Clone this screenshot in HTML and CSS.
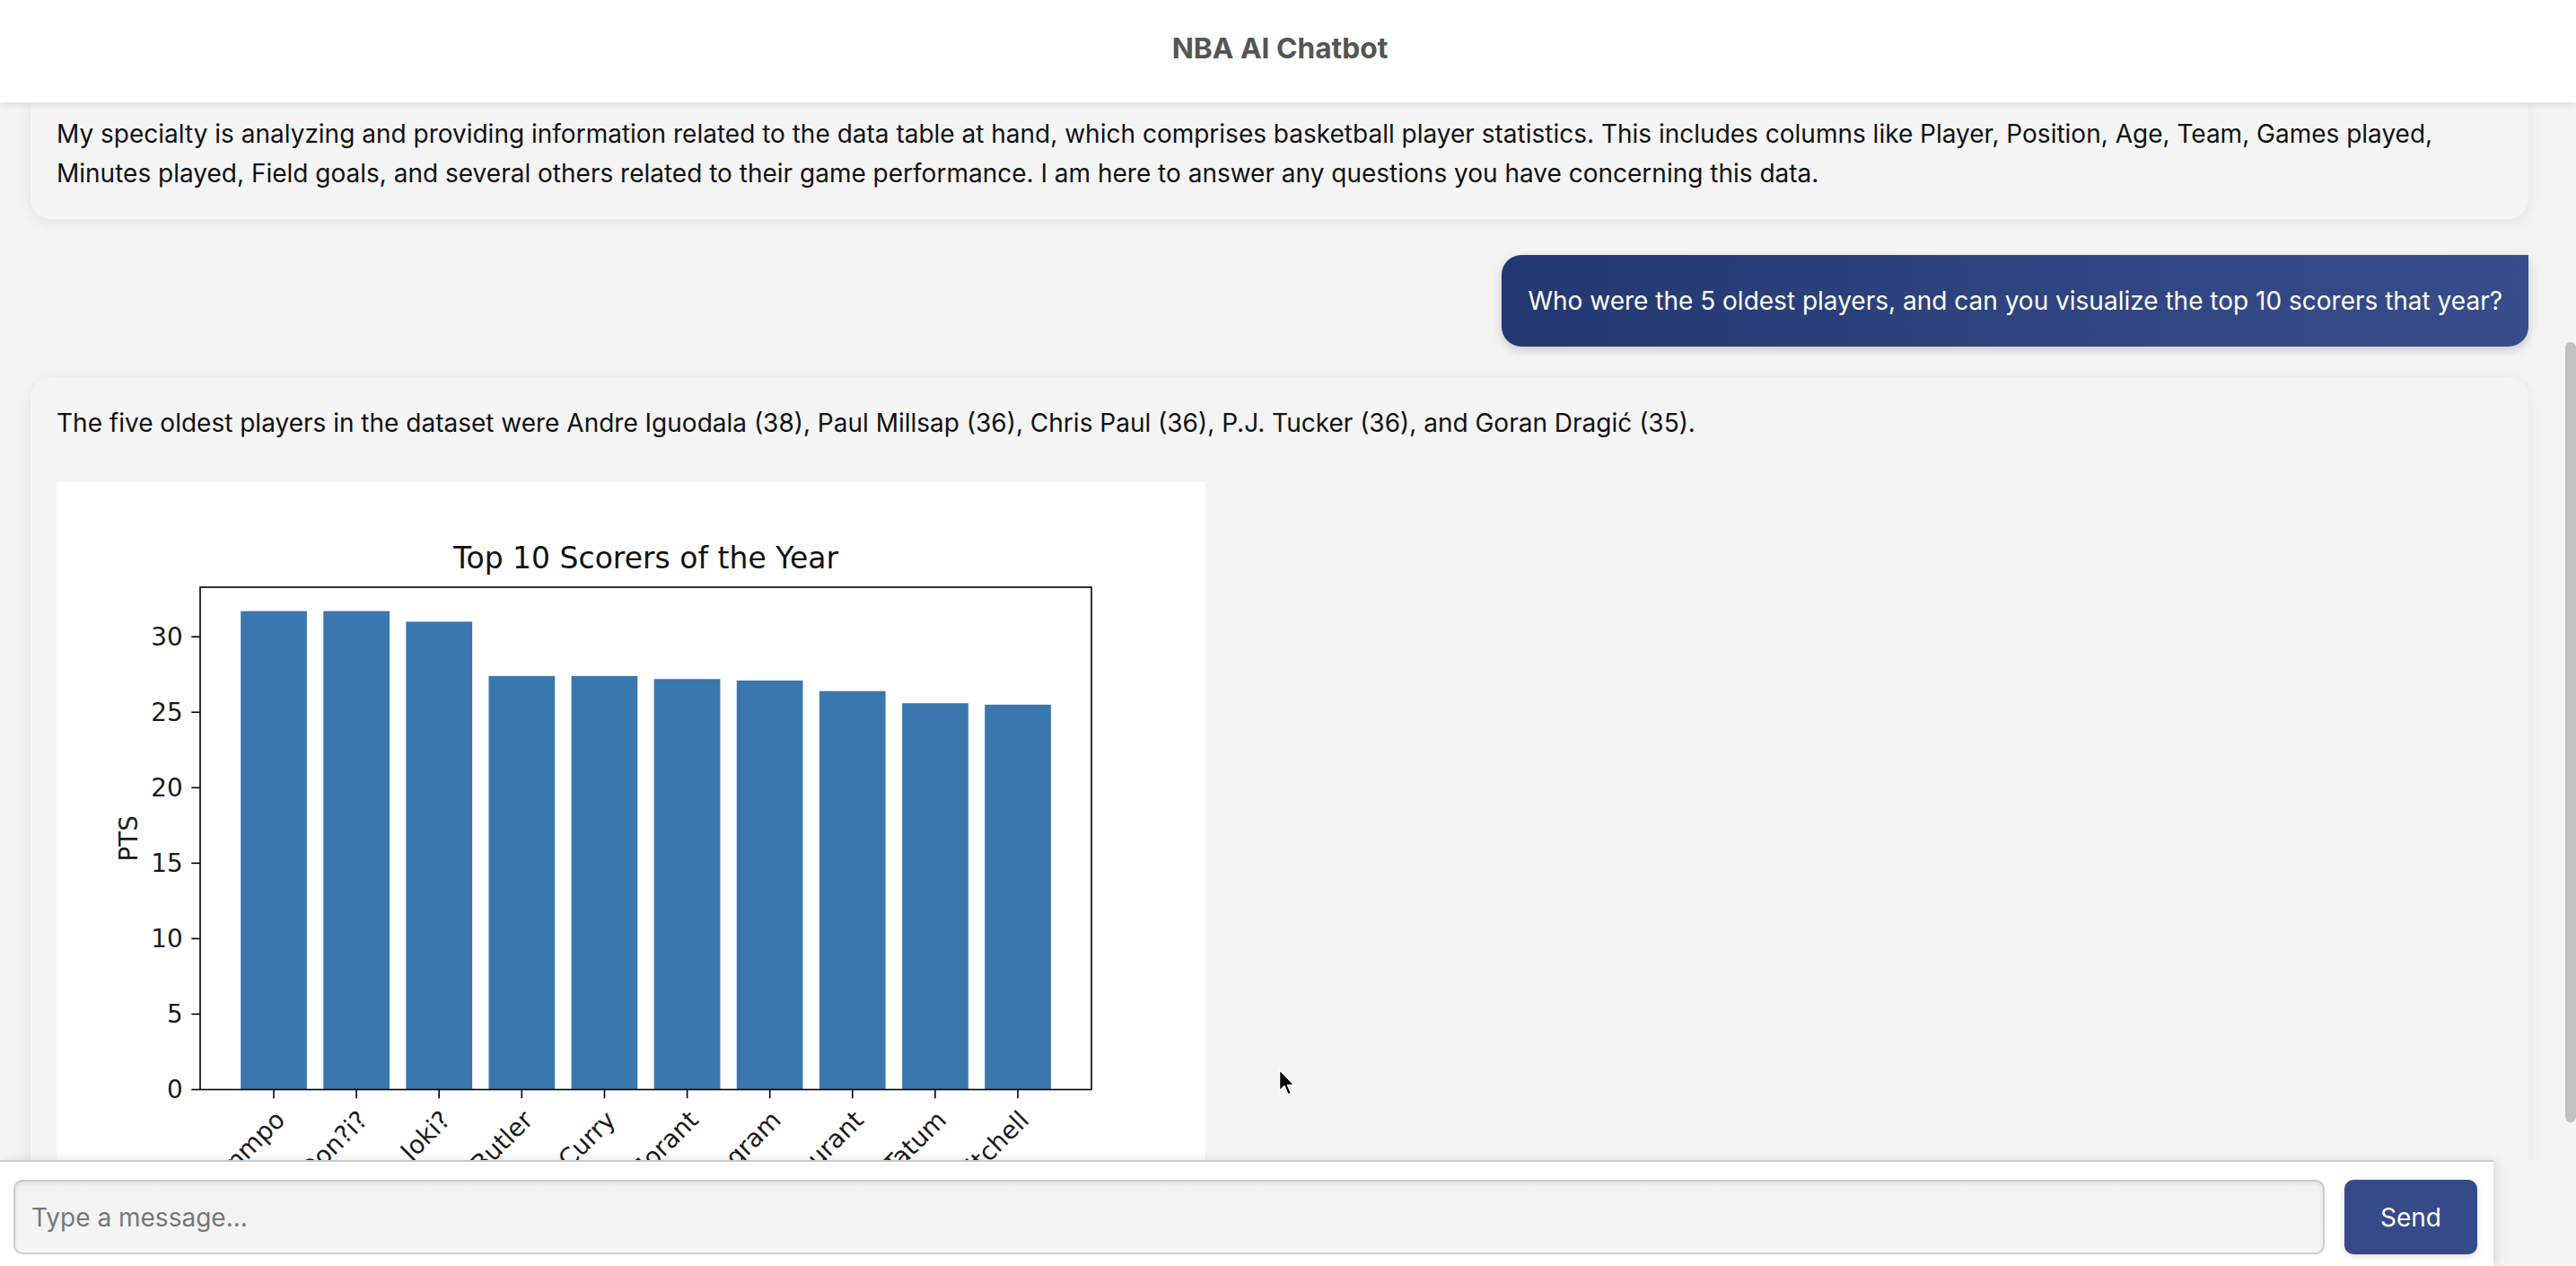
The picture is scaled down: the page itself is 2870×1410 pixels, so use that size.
FILE: index.html
```html
<!DOCTYPE html>
<html lang="en">
<head>
<meta charset="utf-8">
<title>NBA AI Chatbot</title>
<link rel="stylesheet" href="styles.css">
</head>
<body>
<header class="topbar">
  <h1 class="title">NBA AI Chatbot</h1>
</header>
<main class="chat">
  <div class="messages">
    <div class="msg bot">
      <p class="msg-text">My specialty is analyzing and providing information related to the data table at hand, which comprises basketball player statistics. This includes columns like Player, Position, Age, Team, Games played,<br>Minutes played, Field goals, and several others related to their game performance. I am here to answer any questions you have concerning this data.</p>
    </div>
    <div class="msg user">Who were the 5 oldest players, and can you visualize the top 10 scorers that year?</div>
    <div class="msg bot">
      <p class="msg-text">The five oldest players in the dataset were Andre Iguodala (38), Paul Millsap (36), Chris Paul (36), P.J. Tucker (36), and Goran Dragić (35).</p>
      <div class="figure">
        <svg class="chart" width="1280" height="960" viewBox="0 0 1280 960">
          <rect width="1280" height="960" fill="#fff"/>
          <text class="c-title" x="656.5" y="96" text-anchor="middle">Top 10 Scorers of the Year</text>
          <g fill="#3a77af">
            <rect x="205.2" y="143.6" width="73.7" height="532.9"/>
            <rect x="297.3" y="143.6" width="73.7" height="532.9"/>
            <rect x="389.4" y="155.4" width="73.7" height="521.1"/>
            <rect x="481.5" y="215.9" width="73.7" height="460.6"/>
            <rect x="573.6" y="215.9" width="73.7" height="460.6"/>
            <rect x="665.7" y="219.3" width="73.7" height="457.2"/>
            <rect x="757.8" y="220.9" width="73.7" height="455.6"/>
            <rect x="849.9" y="232.7" width="73.7" height="443.8"/>
            <rect x="942.1" y="246.2" width="73.7" height="430.3"/>
            <rect x="1034.2" y="247.8" width="73.7" height="428.7"/>
          </g>
          <rect x="160" y="117" width="993" height="559.5" fill="none" stroke="#000" stroke-width="1.6"/>
          <g stroke="#000" stroke-width="1.6">
            <line x1="150.3" y1="676.5" x2="160" y2="676.5"/>
            <line x1="150.3" y1="592.45" x2="160" y2="592.45"/>
            <line x1="150.3" y1="508.4" x2="160" y2="508.4"/>
            <line x1="150.3" y1="424.35" x2="160" y2="424.35"/>
            <line x1="150.3" y1="340.3" x2="160" y2="340.3"/>
            <line x1="150.3" y1="256.25" x2="160" y2="256.25"/>
            <line x1="150.3" y1="172.2" x2="160" y2="172.2"/>
            <line x1="242" y1="676.5" x2="242" y2="686.2"/>
            <line x1="334.1" y1="676.5" x2="334.1" y2="686.2"/>
            <line x1="426.2" y1="676.5" x2="426.2" y2="686.2"/>
            <line x1="518.3" y1="676.5" x2="518.3" y2="686.2"/>
            <line x1="610.5" y1="676.5" x2="610.5" y2="686.2"/>
            <line x1="702.6" y1="676.5" x2="702.6" y2="686.2"/>
            <line x1="794.7" y1="676.5" x2="794.7" y2="686.2"/>
            <line x1="886.8" y1="676.5" x2="886.8" y2="686.2"/>
            <line x1="978.9" y1="676.5" x2="978.9" y2="686.2"/>
            <line x1="1071" y1="676.5" x2="1071" y2="686.2"/>
          </g>
          <g class="c-tick" text-anchor="end" dominant-baseline="central">
            <text x="140.6" y="676.5">0</text>
            <text x="140.6" y="592.45">5</text>
            <text x="140.6" y="508.4">10</text>
            <text x="140.6" y="424.35">15</text>
            <text x="140.6" y="340.3">20</text>
            <text x="140.6" y="256.25">25</text>
            <text x="140.6" y="172.2">30</text>
          </g>
          <text class="c-tick" transform="translate(89.8 396.75) rotate(-90)" text-anchor="middle">PTS</text>
          <g class="c-tick" text-anchor="end">
            <text transform="translate(256 712) rotate(-45)">Giannis Antetokounmpo</text>
            <text transform="translate(348.1 712) rotate(-45)">Luka Don?i?</text>
            <text transform="translate(440.2 712) rotate(-45)">Nikola Joki?</text>
            <text transform="translate(532.3 712) rotate(-45)">Jimmy Butler</text>
            <text transform="translate(624.5 712) rotate(-45)">Stephen Curry</text>
            <text transform="translate(716.6 712) rotate(-45)">Ja Morant</text>
            <text transform="translate(808.7 712) rotate(-45)">Brandon Ingram</text>
            <text transform="translate(900.8 712) rotate(-45)">Kevin Durant</text>
            <text transform="translate(992.9 712) rotate(-45)">Jayson Tatum</text>
            <text transform="translate(1085 712) rotate(-45)">Donovan Mitchell</text>
          </g>
        </svg>
      </div>
    </div>
  </div>
  <div class="scroll-thumb"></div>
  <svg class="cursor" width="20" height="32" viewBox="0 0 20 32">
    <path d="M1.5 1.5 L1.5 25 L7 19.5 L11 29 L14.5 27.5 L10.5 18.5 L18 18.5 Z" fill="#000" stroke="#fff" stroke-width="1.5" stroke-linejoin="round"/>
  </svg>
</main>
<footer class="composer">
  <input class="input" type="text" placeholder="Type a message...">
  <button class="send" type="button">Send</button>
</footer>
</body>
</html>
```
FILE: styles.css
```css
html, body {
  margin: 0;
  padding: 0;
}

body {
  height: 1410px;
  overflow: hidden;
  display: flex;
  flex-direction: column;
  background: #f4f4f4;
  font-family: Inter, "Noto Sans", sans-serif;
  font-size: 28px;
  line-height: 44px;
  color: #111;
}

.topbar {
  flex: none;
  height: 114px;
  box-sizing: border-box;
  padding-right: 18px;
  display: flex;
  align-items: center;
  justify-content: center;
  background: #fff;
  position: relative;
  z-index: 2;
  box-shadow: 0 2px 10px rgba(0, 0, 0, 0.1);
}

.title {
  margin: 0 0 6px;
  font-size: 31.7px;
  font-weight: 700;
  color: #555;
}

.chat {
  flex: 1;
  min-height: 0;
  position: relative;
  overflow: hidden;
}

.messages {
  display: flex;
  flex-direction: column;
  gap: 37px;
  margin-top: -16px;
  padding: 0 53px 0 34px;
}

.msg {
  padding: 29px;
  border-radius: 22px;
}

.bot {
  background: #f5f5f5;
  box-shadow: 0 4px 14px rgba(0, 0, 0, 0.08);
}

.msg-text {
  margin: 0;
}

.user {
  align-self: flex-end;
  margin: 3px 0 -3px;
  color: #fff;
  border-radius: 22px 0 22px 22px;
  background: linear-gradient(90deg, #23386f 0%, #2f4581 55%, #384d8b 100%);
  box-shadow: 0 4px 12px rgba(0, 0, 0, 0.18);
}

.figure {
  width: 1280px;
  margin-top: 44px;
  background: #fff;
}

.chart {
  display: block;
}

.c-title {
  font-family: "DejaVu Sans", sans-serif;
  font-size: 33px;
  fill: #111;
}

.c-tick {
  font-family: "DejaVu Sans", sans-serif;
  font-size: 27.8px;
  fill: #1a1a1a;
}

.scroll-thumb {
  position: absolute;
  right: 0;
  top: 267px;
  width: 12px;
  height: 869px;
  border-radius: 6px;
  background: #c1c1c1;
}

.cursor {
  position: absolute;
  left: 1424px;
  top: 1076px;
}

.composer {
  flex: none;
  width: 2778px;
  box-sizing: border-box;
  display: flex;
  gap: 22px;
  padding: 20px 18px 13px 15px;
  background: #fff;
  border-top: 2px solid #ccc;
  position: relative;
  z-index: 2;
  box-shadow: 4px 0 12px rgba(0, 0, 0, 0.1);
}

.input {
  flex: 1;
  height: 83px;
  box-sizing: border-box;
  padding: 0 18px;
  border: 2px solid #ccc;
  border-radius: 10px;
  background: linear-gradient(180deg, #f1f1f1 0%, #f6f6f6 100%);
  box-shadow: inset 0 2px 5px rgba(0, 0, 0, 0.08);
  font: inherit;
  color: #333;
  outline: none;
}

.input::placeholder {
  color: #777;
}

.send {
  flex: none;
  width: 148px;
  height: 83px;
  border: none;
  border-radius: 10px;
  background: #364a8a;
  color: #fff;
  font: inherit;
  box-shadow: 0 2px 6px rgba(0, 0, 0, 0.15);
}
```
